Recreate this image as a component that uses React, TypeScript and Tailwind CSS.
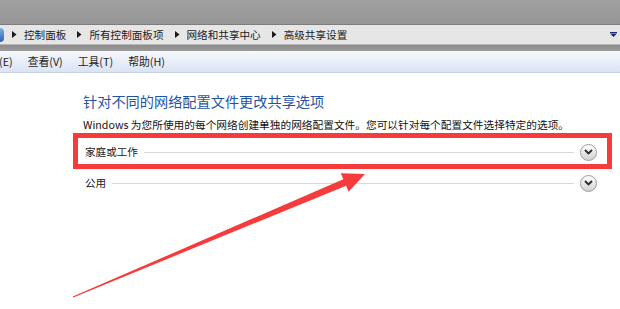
import React from "react";

const font = { fontFamily: '"Noto Sans CJK SC", "Noto Sans", sans-serif' };

function Crumb({ text }: { text: string }) {
  return (
    <div className="flex items-center">
      <svg width="5" height="7" viewBox="0 0 5 7" className="mr-[7px]">
        <path d="M0 0 L4.5 3.5 L0 7 Z" fill="#1a1a1a" />
      </svg>
      <span className="mr-[11px]">{text}</span>
    </div>
  );
}

function Chevron() {
  return (
    <div className="w-[17px] h-[17px] rounded-full border border-[#9c9c9c] bg-gradient-to-b from-[#ffffff] to-[#d2d2d2] flex items-center justify-center shrink-0">
      <svg width="9" height="6" viewBox="0 0 9 6">
        <path d="M1 1 L4.5 4.5 L8 1" stroke="#2a2a2a" strokeWidth="1.8" fill="none" />
      </svg>
    </div>
  );
}

function Row({ label }: { label: string }) {
  return (
    <div className="flex items-center h-[20px] pl-[2px] w-[514px]">
      <span className="text-[10.6px] text-[#1a1a1a] leading-none">{label}</span>
      <div className="flex-1 h-px bg-[#d9d9d9] mx-[6px]" />
      <Chevron />
    </div>
  );
}

export default function App() {
  return (
    <div className="relative w-[620px] h-[309px] overflow-hidden bg-white" style={font}>
      {/* top gray band */}
      <div className="h-[25px] bg-gradient-to-b from-[#a0a0a0] to-[#969696] border-b border-[#7d7d7d]" />
      {/* address bar */}
      <div className="h-[20px] bg-[#e6e6e6] border-b border-[#b8b8b8] flex items-center text-[10.6px] text-[#1a1a1a]">
        <div className="w-[4px] h-[14px] rounded-r-full bg-gradient-to-b from-[#7fb0e8] to-[#2a5fb0] mr-[8px]" />
        <Crumb text="控制面板" />
        <Crumb text="所有控制面板项" />
        <Crumb text="网络和共享中心" />
        <Crumb text="高级共享设置" />
        <div className="flex-1" />
        <svg width="7" height="5" viewBox="0 0 7 5" className="mr-[3px]">
          <rect x="0" y="0" width="7" height="1" fill="#1b2a6b" />
          <path d="M0 1.5 L7 1.5 L3.5 5 Z" fill="#1b2a6b" />
        </svg>
      </div>
      {/* dark band */}
      <div className="h-[6px] bg-gradient-to-b from-[#8c8c8c] to-[#9a9a9a]" />
      {/* menu bar */}
      <div className="h-[22px] bg-gradient-to-b from-[#f6f8fc] to-[#dbe3f3] border-b border-[#c8d1e2] flex items-center gap-[15px] text-[10.8px] text-[#1e1e1e]">
        <span className="-ml-[1px]">(E)</span>
        <span>查看(V)</span>
        <span>工具(T)</span>
        <span>帮助(H)</span>
      </div>
      {/* content */}
      <div className="pl-[83px] pt-[18px] flex flex-col">
        <div className="text-[14.2px] leading-[20px] text-[#1f55a3]">针对不同的网络配置文件更改共享选项</div>
        <div className="mt-[6px] text-[10.7px] leading-[16px] text-[#111]">
          Windows 为您所使用的每个网络创建单独的网络配置文件。您可以针对每个配置文件选择特定的选项。
        </div>
        <div className="mt-[9px]">
          <Row label="家庭或工作" />
        </div>
        <div className="mt-[11px]">
          <Row label="公用" />
        </div>
      </div>
      {/* red annotation box */}
      <div className="absolute left-[73px] top-[133px] w-[539px] h-[36px] border-[5px] border-[#f53b3b]" />
      {/* red arrow */}
      <svg className="absolute left-0 top-0" width="620" height="309" viewBox="0 0 620 309">
        <polygon
          points="72.8,296.5 343.3,179.3 340.8,173.3 365,174 348.6,191.7 346.1,185.7 73.2,297.5"
          fill="#f53b3b"
        />
      </svg>
    </div>
  );
}
